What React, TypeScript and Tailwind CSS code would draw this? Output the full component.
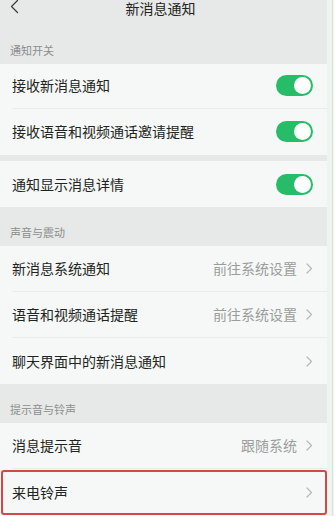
import React from "react";

const Chevron = () => (
  <svg width="7" height="11" viewBox="0 0 7 11" className="shrink-0">
    <path d="M1 1 L5.5 5.5 L1 10" fill="none" stroke="#b5b8b6" strokeWidth="1.2" strokeLinecap="round" strokeLinejoin="round" />
  </svg>
);

const Switch = () => (
  <div className="w-[37px] h-[21px] rounded-full bg-[#27bd68] flex items-center justify-end pr-[2px] shrink-0">
    <div className="w-[17px] h-[17px] rounded-full bg-white" />
  </div>
);

const Section = ({ label }: { label: string }) => (
  <div className="h-[39px] bg-[#e7e9e8] flex items-end pb-[8px] pl-[10px] text-[11px] leading-[12px] text-[#8c8e8d]">
    {label}
  </div>
);

const Row = ({
  text,
  right,
  toggle,
  chevron,
  divider,
  h = 46,
}: {
  text: string;
  right?: string;
  toggle?: boolean;
  chevron?: boolean;
  divider?: boolean;
  h?: number;
}) => (
  <div className="bg-[#f5f8f6] pl-[12px]">
    <div
      className={
        "flex items-center pr-[14px] " + (divider ? "border-b border-[#e8ede9]" : "")
      }
      style={{ height: h }}
    >
      <span className="flex-1 text-[14px] text-[#222422]">{text}</span>
      {right && <span className="text-[14px] text-[#9b9d9c] mr-[9px]">{right}</span>}
      {toggle && <Switch />}
      {chevron && <Chevron />}
    </div>
  </div>
);

export default function App() {
  return (
    <div
      className="w-[334px] h-[516px] overflow-hidden flex bg-[#eef5f0]"
      style={{ fontFamily: '"Noto Sans CJK SC", "Noto Sans", sans-serif' }}
    >
      <div className="w-[327px] flex flex-col">
        <div className="h-[25px] bg-[#e7e9e8] relative flex justify-center">
          <svg width="9" height="14" viewBox="0 0 9 14" className="absolute left-[10px] top-[0px]">
            <path d="M7.5 0.5 L1.5 6.5 L7.5 12.5" fill="none" stroke="#3a3c3b" strokeWidth="1.2" strokeLinecap="round" strokeLinejoin="round" />
          </svg>
          <span className="text-[14px] leading-[16px] text-[#222422] ml-[-6px]">新消息通知</span>
        </div>
        <Section label="通知开关" />
        <Row text="接收新消息通知" toggle divider h={45} />
        <Row text="接收语音和视频通话邀请提醒" toggle />
        <div className="h-[7px] bg-[#e7e9e8]" />
        <Row text="通知显示消息详情" toggle />
        <Section label="声音与震动" />
        <Row text="新消息系统通知" right="前往系统设置" chevron divider />
        <Row text="语音和视频通话提醒" right="前往系统设置" chevron divider />
        <Row text="聊天界面中的新消息通知" chevron />
        <Section label="提示音与铃声" />
        <Row text="消息提示音" right="跟随系统" chevron divider />
        <div className="relative">
          <Row text="来电铃声" chevron h={47} />
          <div className="absolute left-[1px] right-0 top-[1px] bottom-[1px] border-2 border-[#cf4a44] rounded-[3px]" />
        </div>
      </div>
      <div className="flex-1 flex">
        <div className="w-[5px]" />
        <div className="w-[1px] bg-[#d6e6db]" />
      </div>
    </div>
  );
}
